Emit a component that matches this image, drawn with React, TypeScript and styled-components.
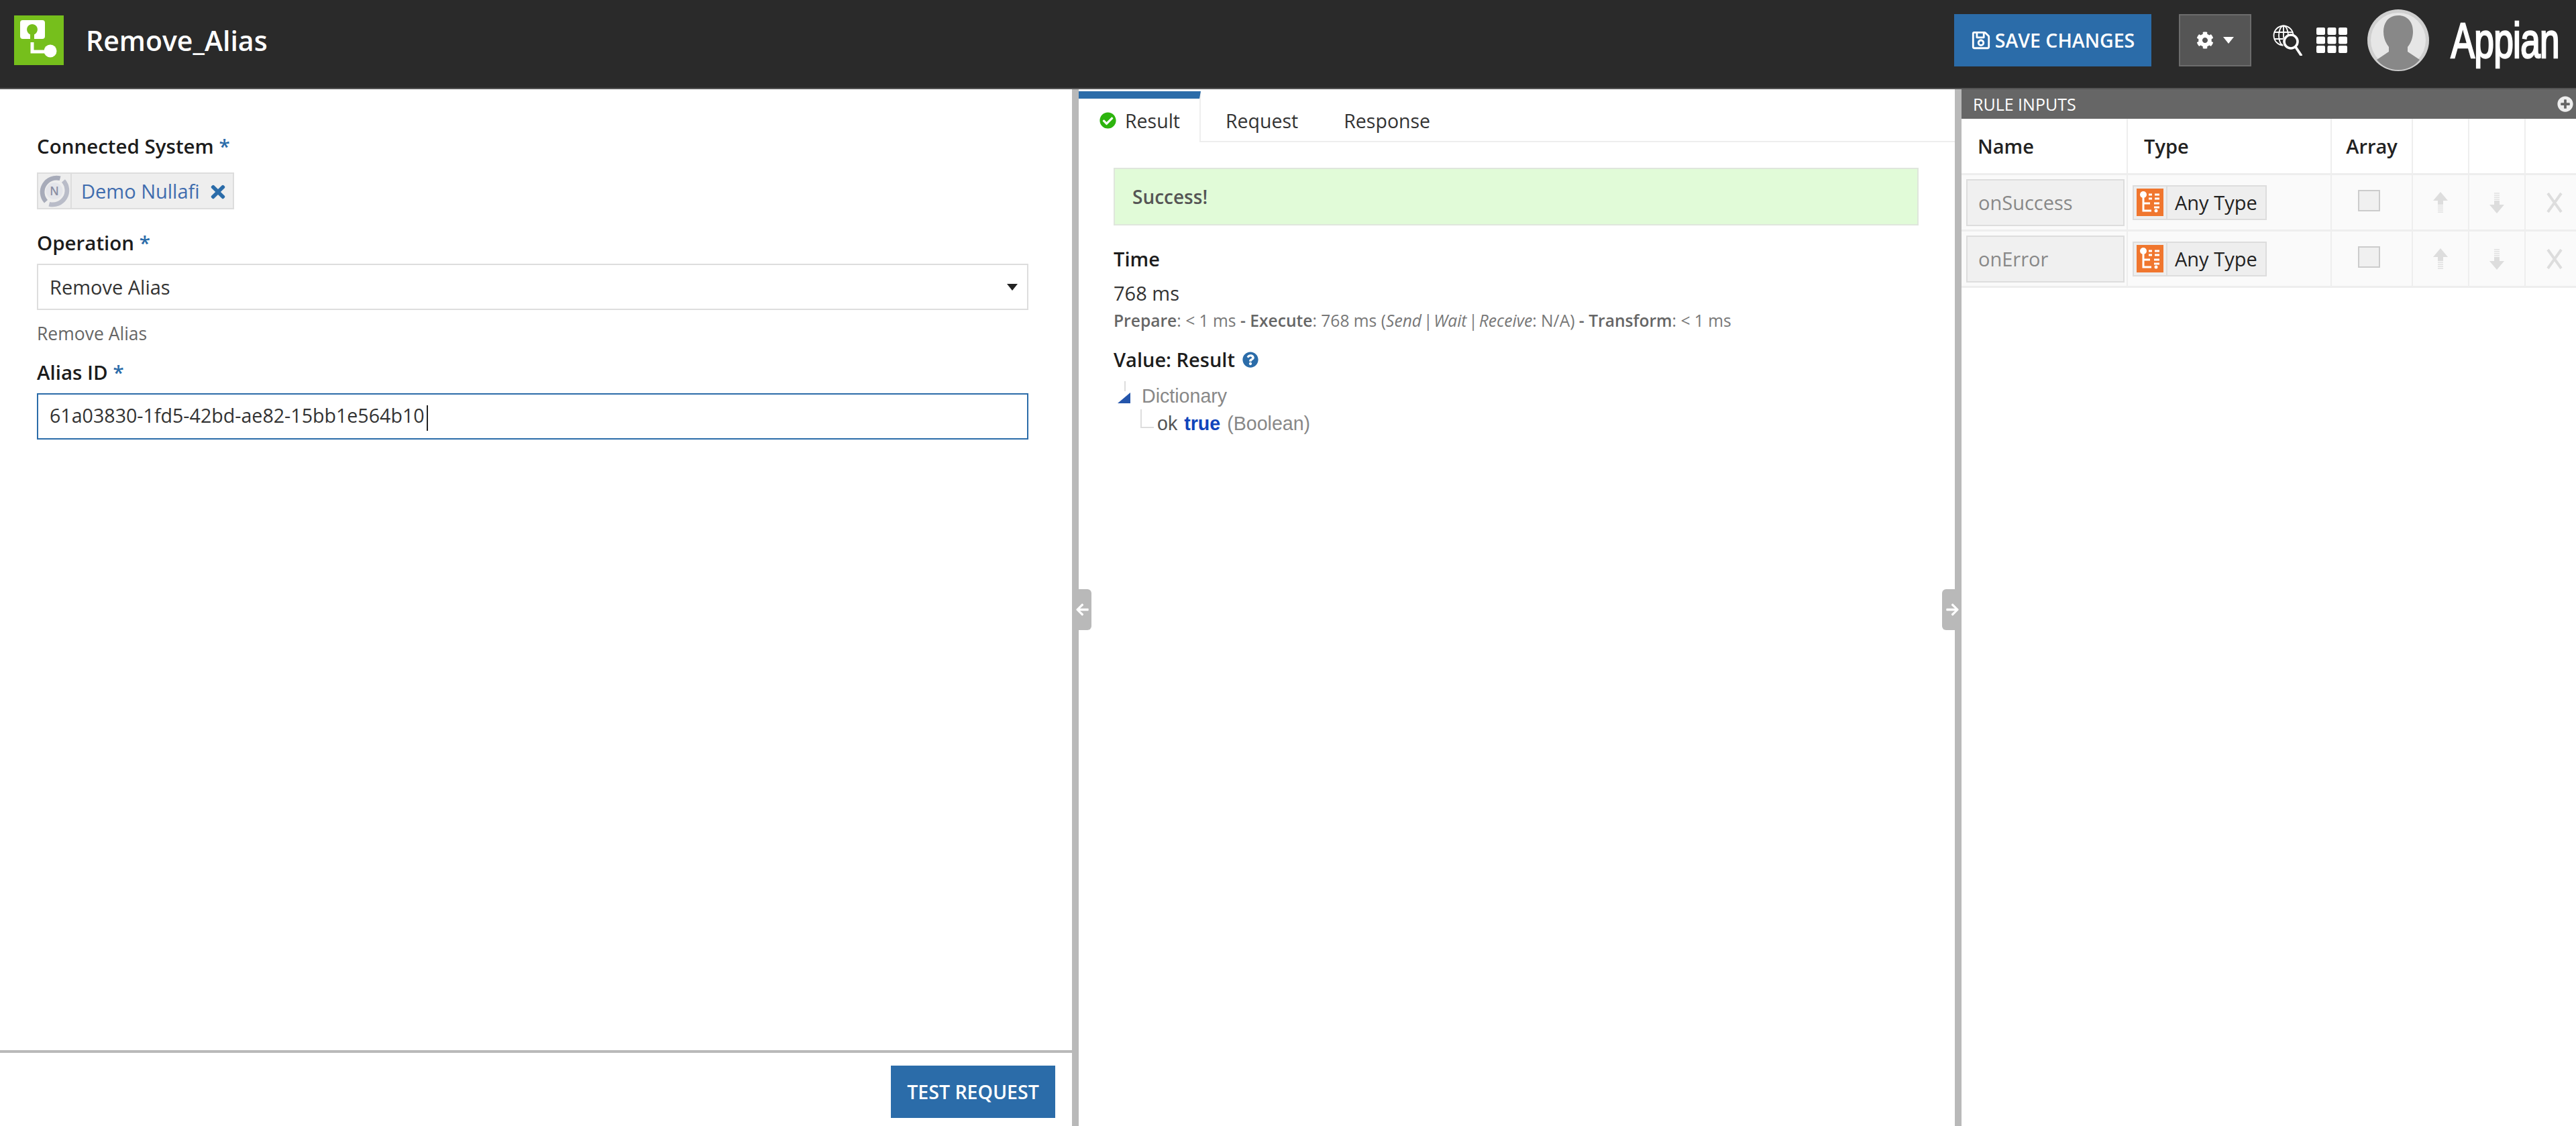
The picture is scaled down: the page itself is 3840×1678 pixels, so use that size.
import React from 'react';
import styled, { createGlobalStyle } from 'styled-components';
import { FaCheckCircle, FaCog, FaPlusCircle, FaQuestionCircle, FaRegSave, FaTimes, FaArrowLeft, FaArrowRight } from 'react-icons/fa';

const Global = createGlobalStyle`
  html, body { margin: 0; padding: 0; background: #fff; }
  body { font-family: "Open Sans", "Liberation Sans", sans-serif; font-size: 29px; color: #222; }
  * { box-sizing: border-box; }
`;

const BLUE = '#2b6ca9';

const Page = styled.div`
  width: 3840px;
  height: 1678px;
  display: flex;
  flex-direction: column;
  overflow: hidden;
`;

const Header = styled.header`
  height: 133px;
  flex: none;
  background: #2a2a2a;
  border-bottom: 2px solid #555;
  display: flex;
  align-items: center;
  padding: 0 21px 11px;
`;

const AppTitle = styled.h1`
  margin: 0 auto 0 33px;
  font-size: 41px;
  font-weight: 600;
  color: #fff;
`;

const SaveButton = styled.button`
  width: 294px;
  height: 78px;
  border: 0;
  background: ${BLUE};
  color: #fff;
  font: 600 28.5px "Open Sans", sans-serif;
  display: flex;
  align-items: center;
  justify-content: center;
  gap: 6px;
  padding: 0;
  svg { font-size: 30px; }
`;

const GearButton = styled.button`
  width: 108px;
  height: 78px;
  margin-left: 41px;
  background: #555;
  border: 2px solid #6c6c6c;
  color: #fff;
  display: flex;
  align-items: center;
  justify-content: center;
  gap: 14px;
  padding: 0;
  svg { font-size: 26px; }
`;

const Caret = styled.span`
  width: 0;
  height: 0;
  border-left: 8px solid transparent;
  border-right: 8px solid transparent;
  border-top: 10px solid ${(p: { $color?: string }) => p.$color || '#fff'};
`;

const HeaderIcons = styled.div`
  display: flex;
  align-items: center;
  margin-left: 32px;
  gap: 21px;
`;

const Avatar = styled.svg`
  width: 92px;
  height: 92px;
  margin-left: 30px;
`;

const LogoBox = styled.div`
  width: 169px;
  height: 70px;
  margin-left: 29px;
  display: flex;
  align-items: center;
  justify-content: center;
`;

const Wordmark = styled.span`
  font: 400 74px "Liberation Sans", sans-serif;
  color: #fff;
  transform: scaleX(0.72);
  white-space: nowrap;
  letter-spacing: -1px;
  -webkit-text-stroke: 2.5px #fff;
`;

const Main = styled.main`
  flex: 1;
  display: grid;
  grid-template-columns: 1598px 1326px 916px;
  min-height: 0;
`;

const LeftPane = styled.section`
  display: flex;
  flex-direction: column;
  min-height: 0;
`;

const Form = styled.div`
  flex: 1;
  padding: 65px 65px 0 55px;
`;

const Label = styled.div`
  font-weight: 600;
  font-size: 29.5px;
  color: #1c1c1c;
  line-height: 40px;
  margin-bottom: 11px;
  b { color: ${BLUE}; font-weight: 600; }
`;

const Tag = styled.div`
  display: flex;
  width: fit-content;
  align-items: center;
  height: 55px;
  background: #eee;
  border: 2px solid #ddd;
  color: #3f6cae;
  margin: 19px 0 30px;
  svg.cs { width: 50px; height: 51px; border-right: 2px solid #ddd; flex: none; }
`;

const TagText = styled.span`
  margin-left: 14px;
`;

const TagClose = styled(FaTimes)`
  color: ${BLUE};
  font-size: 30px;
  margin: 2px 7px 0 12px;
`;

const Field = styled.div<{ $focus?: boolean }>`
  height: 69px;
  display: flex;
  align-items: center;
  justify-content: space-between;
  padding: 0 14px 0 17px;
  border: 2px solid ${(p) => (p.$focus ? BLUE : '#ddd')};
  background: #fff;
  color: #333;
  font-size: ${(p) => (p.$focus ? '28.6px' : '29px')};
`;

const Caretline = styled.span`
  display: inline-block;
  width: 2px;
  height: 38px;
  margin-left: 3px;
  background: #222;
  vertical-align: middle;
`;

const Help = styled.div`
  color: #666;
  font-size: 26.5px;
  line-height: 36px;
  margin: 17px 0 20px;
`;

const Footer = styled.div`
  flex: none;
  height: 113px;
  border-top: 4px solid #b9b9b9;
  display: flex;
  justify-content: flex-end;
  padding: 19px 25px 0 0;
`;

const TestButton = styled.button`
  width: 245px;
  height: 78px;
  border: 0;
  background: ${BLUE};
  color: #fff;
  font: 600 28.5px "Open Sans", sans-serif;
  padding: 0;
`;

const MiddlePane = styled.section`
  position: relative;
  border-left: 10px solid #b9b9b9;
  border-right: 10px solid #b9b9b9;
  min-height: 0;
`;

const Handle = styled.div<{ $side: 'left' | 'right' }>`
  position: absolute;
  top: 745px;
  width: 29px;
  height: 61px;
  background: #b9b9b9;
  color: #fff;
  font-size: 21px;
  display: flex;
  align-items: center;
  padding-left: 5px;
  ${(p) =>
    p.$side === 'left'
      ? 'left: -10px; border-radius: 0 6px 6px 0;'
      : 'right: -10px; border-radius: 6px 0 0 6px;'}
`;

const Tabs = styled.div`
  height: 79px;
  padding-top: 3px;
  display: flex;
  border-bottom: 2px solid #eee;
`;

const Tab = styled.div`
  display: flex;
  align-items: center;
  font-size: 28.5px;
  color: #333;
`;

const ActiveTab = styled(Tab)`
  gap: 13px;
  width: 182px;
  height: 76px;
  padding-left: 31px;
  border-top: 11px solid ${BLUE};
  border-right: 2px solid #eee;
  background: #fff;
  svg { color: #2db40e; font-size: 25px; }
`;

const PlainTab = styled(Tab)<{ $gap: number }>`
  height: 76px;
  padding-top: 12px;
  margin-left: ${(p) => p.$gap}px;
`;

const ResultBody = styled.div`
  padding: 38px 54px 0 52px;
`;

const SuccessBox = styled.div`
  height: 86px;
  background: #e1fbd8;
  border: 2px solid #dfe6dc;
  display: flex;
  align-items: center;
  padding-left: 26px;
  font-weight: 600;
  font-size: 28px;
  color: #555;
  margin-bottom: 30px;
`;

const SectionTitle = styled.div`
  display: flex;
  align-items: center;
  gap: 11px;
  font-weight: 600;
  color: #1c1c1c;
  line-height: 40px;
  svg { color: ${BLUE}; font-size: 24px; }
`;

const TimeValue = styled.div`
  line-height: 40px;
  color: #333;
  margin-top: 11px;
`;

const TimeDetail = styled.div`
  font-size: 24.6px;
  line-height: 34px;
  margin: 4px 0 21px;
  color: #777;
  white-space: nowrap;
  b { font-weight: 600; color: #666; }
  i { font-style: italic; word-spacing: -4px; }
`;

const Tree = styled.div`
  font-family: "Liberation Sans", Arial, sans-serif;
  font-size: 28.6px;
  color: #888;
  margin-top: 14px;
  padding-left: 42px;
  position: relative;
`;

const TreeRoot = styled.div`
  position: relative;
  line-height: 41px;
`;

const Expander = styled.span`
  position: absolute;
  left: -36px;
  top: 15px;
  width: 0;
  height: 0;
  border-left: 19px solid transparent;
  border-bottom: 16px solid #2455ab;
  &::before {
    content: '';
    position: absolute;
    left: -9px;
    top: -17px;
    height: 15px;
    border-left: 2px solid #ddd;
  }
`;

const TreeChild = styled.div`
  position: relative;
  margin-left: 23px;
  line-height: 41px;
  &::before {
    content: '';
    position: absolute;
    left: -25px;
    top: -1px;
    width: 18px;
    height: 26px;
    border-left: 2px solid #ddd;
    border-bottom: 2px solid #ddd;
  }
  span { color: #555; }
  strong { color: #1144bb; font-weight: 700; margin: 0 2px; }
`;

const RightPane = styled.section`
  display: flex;
  flex-direction: column;
  min-height: 0;
`;

const RuleHeader = styled.div`
  height: 44px;
  background: #666;
  display: flex;
  align-items: center;
  justify-content: space-between;
  padding: 0 4px 0 17px;
  color: #fff;
  font-size: 25px;
  svg { font-size: 24px; color: #eee; }
`;

const RuleTable = styled.div`
  display: grid;
  grid-template-columns: 248px 304px 121px 84px 84px 75px;
`;

const HeadCell = styled.div<{ $center?: boolean }>`
  height: 84px;
  display: flex;
  align-items: center;
  justify-content: ${(p) => (p.$center ? 'center' : 'flex-start')};
  padding-left: ${(p) => (p.$center ? '0' : '24px')};
  font-weight: 600;
  color: #222;
  border-right: 2px solid #eee;
  border-bottom: 3px solid #eee;
  &:nth-child(6n) { border-right: 0; }
`;

const Cell = styled.div`
  height: 84px;
  background: #fafafa;
  display: flex;
  align-items: center;
  justify-content: center;
  border-right: 2px solid #eee;
  border-bottom: 3px solid #eee;
  &:nth-child(6n) { border-right: 0; padding-left: 11px; }
`;

const NameCell = styled(Cell)`
  justify-content: flex-start;
  padding-left: 7px;
`;

const TypeCell = styled(Cell)`
  justify-content: flex-start;
  padding-left: 7px;
`;

const NameInput = styled.div`
  width: 236px;
  height: 70px;
  background: #f0f0f0;
  border: 2px solid #ddd;
  color: #888;
  display: flex;
  align-items: center;
  padding-left: 16px;
`;

const TypeChip = styled.div`
  height: 52px;
  width: 200px;
  background: #eee;
  border: 2px solid #ddd;
  display: flex;
  align-items: center;
  color: #222;
`;

const TypeIconCell = styled.span`
  width: 50px;
  height: 100%;
  border-right: 2px solid #ddd;
  display: flex;
  align-items: center;
  justify-content: center;
  flex: none;
`;

const TypeName = styled.span`
  margin-left: 11px;
`;

const CheckBox = styled.span`
  width: 33px;
  height: 32px;
  background: #f0f0f0;
  border: 2px solid #ccc;
  margin: 0 8px 6px 0;
`;

const AppLogo = () => (
  <svg width="74" height="74" viewBox="0 0 74 74">
    <rect width="74" height="74" fill="#76bf1c" />
    <path
      fillRule="evenodd"
      fill="#fff"
      d="M13 7h29a4 4 0 0 1 4 4v20a4 4 0 0 1-4 4H13a4 4 0 0 1-4-4V11a4 4 0 0 1 4-4zM27 13a8 8 0 0 0-3 15.4V35h6v-6.600A8 8 0 0 0 27 13z"
    />
    <path d="M27 40v14h20" fill="none" stroke="#fff" strokeWidth="5" />
    <circle cx="54" cy="53" r="9.500" fill="#fff" />
  </svg>
);

const GlobeSearch = () => (
  <svg width="44" height="46" viewBox="0 0 44 46" fill="none" stroke="#fff">
    <g strokeWidth="1.8">
      <circle cx="16" cy="16" r="14.5" />
      <ellipse cx="16" cy="16" rx="7" ry="14.5" />
      <path d="M16 1.5v29M2 11h28M2 21h28" />
    </g>
    <circle cx="27" cy="26" r="12.500" fill="#2a2a2a" stroke="none" />
    <circle cx="27" cy="25" r="10" strokeWidth="3.6" />
    <path d="M34 33l8 12" strokeWidth="3.8" strokeLinecap="round" />
  </svg>
);

const AppGrid = () => (
  <svg width="46" height="38" viewBox="0 0 46 38" fill="#fff">
    {[0, 1, 2].map((r) =>
      [0, 1, 2].map((c) => <rect key={`${r}-${c}`} x={c * 16.5} y={r * 13.5} width="13" height="11" rx="2" />)
    )}
  </svg>
);

const ConnectedIcon = () => (
  <svg className="cs" viewBox="0 0 50 51" fill="none">
    <rect width="50" height="51" fill="#eee" />
    <path d="M12 42A22 22 0 0 1 34 6" stroke="#a7abb9" strokeWidth="7" />
    <path d="M39 10A22 22 0 0 1 17 46" stroke="#b9bcc8" strokeWidth="7" />
    <circle cx="25" cy="25.500" r="13" fill="#e4e5ea" />
    <text x="25" y="32" textAnchor="middle" fontFamily="Open Sans" fontWeight="600" fontSize="18" fill="#8b8fa3">
      N
    </text>
  </svg>
);

const TypeIcon = () => (
  <svg width="40" height="41" viewBox="0 0 40 41">
    <rect width="40" height="41" fill="#f0762e" />
    <g fill="none" stroke="#fff" strokeWidth="3">
      <path d="M10 13v20h12" />
      <path d="M10 22h10" />
      <path d="M18 9h5M27 9h7M18 15h5M27 15h7M26 22h8M26 28h8" />
    </g>
    <circle cx="10" cy="9" r="5" fill="#fff" />
    <circle cx="29" cy="33" r="2.500" fill="#fff" />
  </svg>
);

const ArrowIcon = ({ down }: { down?: boolean }) => (
  <svg width="24" height="32" viewBox="0 0 24 32" fill="#ddd" style={down ? { transform: 'rotate(180deg)' } : undefined}>
    <path d="M12 0l11 13h-7v6H8v-6H1z" />
    <path d="M8 20h8v2H8zM8 23h8v2H8zM8 26h8v2H8zM8 29h8v2H8z" opacity=".7" />
  </svg>
);

const CrossIcon = () => (
  <svg width="26" height="30" viewBox="0 0 26 30" stroke="#ddd" strokeWidth="4" fill="none">
    <path d="M3 1l20 28M23 1L3 29" />
  </svg>
);

const inputs = ['onSuccess', 'onError'];

export default function App() {
  return (
    <Page>
      <Global />
      <Header>
        <AppLogo />
        <AppTitle>Remove_Alias</AppTitle>
        <SaveButton>
          <FaRegSave />
          SAVE CHANGES
        </SaveButton>
        <GearButton>
          <FaCog />
          <Caret />
        </GearButton>
        <HeaderIcons>
          <GlobeSearch />
          <AppGrid />
        </HeaderIcons>
        <Avatar viewBox="0 0 92 92">
          <circle cx="46" cy="46" r="46" fill="#cfcfcf" />
          <circle cx="46" cy="46" r="41" fill="#e6e6e6" />
          <path
            d="M46 9c14 0 22 10 22 24 0 9-3 17-8 23v7l18 12a41 41 0 0 1-64 0l18-12v-7c-5-6-8-14-8-23 0-14 8-24 22-24z"
            fill="#888"
          />
        </Avatar>
        <LogoBox>
          <Wordmark>Appian</Wordmark>
        </LogoBox>
      </Header>
      <Main>
        <LeftPane>
          <Form>
            <Label>
              Connected System <b>*</b>
            </Label>
            <Tag>
              <ConnectedIcon />
              <TagText>Demo Nullafi</TagText>
              <TagClose />
            </Tag>
            <Label>
              Operation <b>*</b>
            </Label>
            <Field>
              Remove Alias
              <Caret $color="#222" />
            </Field>
            <Help>Remove Alias</Help>
            <Label>
              Alias ID <b>*</b>
            </Label>
            <Field $focus>
              <span>
                61a03830-1fd5-42bd-ae82-15bb1e564b10
                <Caretline />
              </span>
            </Field>
          </Form>
          <Footer>
            <TestButton>TEST REQUEST</TestButton>
          </Footer>
        </LeftPane>
        <MiddlePane>
          <Handle $side="left">
            <FaArrowLeft />
          </Handle>
          <Handle $side="right">
            <FaArrowRight />
          </Handle>
          <Tabs>
            <ActiveTab>
              <FaCheckCircle />
              Result
            </ActiveTab>
            <PlainTab $gap={37}>Request</PlainTab>
            <PlainTab $gap={68}>Response</PlainTab>
          </Tabs>
          <ResultBody>
            <SuccessBox>Success!</SuccessBox>
            <SectionTitle>Time</SectionTitle>
            <TimeValue>768 ms</TimeValue>
            <TimeDetail>
              <b>Prepare</b>: &lt; 1 ms <b>-</b> <b>Execute</b>: 768 ms (<i>Send | Wait | Receive</i>: N/A) <b>-</b>{' '}
              <b>Transform</b>: &lt; 1 ms
            </TimeDetail>
            <SectionTitle>
              Value: Result
              <FaQuestionCircle />
            </SectionTitle>
            <Tree>
              <TreeRoot>
                <Expander />
                Dictionary
              </TreeRoot>
              <TreeChild>
                <span>ok</span> <strong>true</strong> (Boolean)
              </TreeChild>
            </Tree>
          </ResultBody>
        </MiddlePane>
        <RightPane>
          <RuleHeader>
            RULE INPUTS
            <FaPlusCircle />
          </RuleHeader>
          <RuleTable>
            <HeadCell>Name</HeadCell>
            <HeadCell>Type</HeadCell>
            <HeadCell $center>Array</HeadCell>
            <HeadCell />
            <HeadCell />
            <HeadCell />
            {inputs.map((name) => (
              <React.Fragment key={name}>
                <NameCell>
                  <NameInput>{name}</NameInput>
                </NameCell>
                <TypeCell>
                  <TypeChip>
                    <TypeIconCell>
                      <TypeIcon />
                    </TypeIconCell>
                    <TypeName>Any Type</TypeName>
                  </TypeChip>
                </TypeCell>
                <Cell>
                  <CheckBox />
                </Cell>
                <Cell>
                  <ArrowIcon />
                </Cell>
                <Cell>
                  <ArrowIcon down />
                </Cell>
                <Cell>
                  <CrossIcon />
                </Cell>
              </React.Fragment>
            ))}
          </RuleTable>
        </RightPane>
      </Main>
    </Page>
  );
}
